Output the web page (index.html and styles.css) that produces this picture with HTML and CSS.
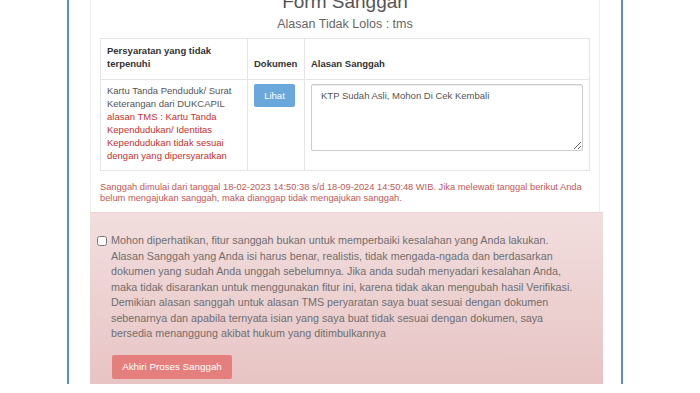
FILE: index.html
```html
<!DOCTYPE html>
<html lang="id">
<head>
  <meta charset="UTF-8">
  <meta name="viewport" content="width=device-width, initial-scale=1">
  <title>Form Sanggah</title>
  <link rel="stylesheet" href="styles.css">
</head>
<body>

<div class="frame">
  <div class="panel">
    <h2 class="title">Form Sanggah</h2>
    <p class="subtitle">Alasan Tidak Lolos : tms</p>

    <table class="req-table">
      <thead>
        <tr>
          <th class="col-req">Persyaratan yang tidak terpenuhi</th>
          <th class="col-doc">Dokumen</th>
          <th>Alasan Sanggah</th>
        </tr>
      </thead>
      <tbody>
        <tr>
          <td>
            Kartu Tanda Penduduk/ Surat Keterangan dari DUKCAPIL
            <span class="tms">alasan TMS : Kartu Tanda Kependudukan/ Identitas Kependudukan tidak sesuai dengan yang dipersyaratkan</span>
          </td>
          <td><button class="btn-info">Lihat</button></td>
          <td><textarea class="reason">KTP Sudah Asli, Mohon Di Cek Kembali</textarea></td>
        </tr>
      </tbody>
    </table>

    <p class="deadline">Sanggah dimulai dari tanggal 18-02-2023 14:50:38 s/d 18-09-2024 14:50:48 WIB. Jika melewati tanggal berikut Anda belum mengajukan sanggah, maka dianggap tidak mengajukan sanggah.</p>
  </div>

  <div class="alert">
    <label class="agree">
      <input type="checkbox">
      <span>Mohon diperhatikan, fitur sanggah bukan untuk memperbaiki kesalahan yang Anda lakukan. Alasan Sanggah yang Anda isi harus benar, realistis, tidak mengada-ngada dan berdasarkan dokumen yang sudah Anda unggah sebelumnya. Jika anda sudah menyadari kesalahan Anda, maka tidak disarankan untuk menggunakan fitur ini, karena tidak akan mengubah hasil Verifikasi. Demikian alasan sanggah untuk alasan TMS peryaratan saya buat sesuai dengan dokumen sebenarnya dan apabila ternyata isian yang saya buat tidak sesuai dengan dokumen, saya bersedia menanggung akibat hukum yang ditimbulkannya</span>
    </label>
    <button class="btn-danger" disabled>Akhiri Proses Sanggah</button>
  </div>
</div>

</body>
</html>
```

FILE: styles.css
```css
body {
  margin: 0;
  font-family: 'Liberation Sans', Arial, sans-serif;
  background: #fff;
  color: #333;
  overflow: hidden;
}

.frame {
  margin-left: 67px;
  width: 556px;
  height: 393px;
  border-left: 2px solid #5b8bd6;
  border-right: 2px solid #5b8bd6;
  padding: 0 21px 0 21px;
  box-sizing: border-box;
}

.panel {
  border: 1px solid #eef0f0;
  border-top: none;
  border-bottom: none;
  padding: 0 9px;
}

.title {
  margin: -9px 0 0;
  font-size: 19px;
  font-weight: normal;
  line-height: 22px;
  text-align: center;
  color: #555;
}
.subtitle {
  margin: 4px 0 6px;
  font-size: 12.5px;
  line-height: 15px;
  text-align: center;
  color: #666;
}

/* Table */
.req-table {
  width: 100%;
  border-collapse: collapse;
  font-size: 9.5px;
  line-height: 13px;
}
.req-table th,
.req-table td {
  border: 1px solid #e4e6e6;
  padding: 4px 6px 8px;
  text-align: left;
  vertical-align: top;
}
.req-table th {
  vertical-align: bottom;
  font-weight: bold;
  color: #333;
  padding-top: 5px;
  padding-bottom: 9px;
}
.req-table td { color: #555; }
.col-req { width: 134px; }
.col-doc { width: 44px; }
.tms { color: #c9302c; display: block; }

.btn-info {
  background: #6aa8db;
  color: #fff;
  border: none;
  border-radius: 2px;
  width: 41px;
  height: 23px;
  font-family: inherit;
  font-size: 9.5px;
  cursor: pointer;
}
.reason {
  display: block;
  width: 100%;
  height: 67px;
  box-sizing: border-box;
  border: 1px solid #ccc;
  border-radius: 2px;
  padding: 5px 9px;
  font-family: inherit;
  font-size: 9.5px;
  color: #555;
  resize: vertical;
  box-shadow: inset 0 1px 1px rgba(0,0,0,0.08);
}

.deadline {
  margin: 11px 0 0;
  padding-bottom: 8px;
  font-size: 9.3px;
  line-height: 11px;
  color: #c45753;
}

/* Alert */
.alert {
  margin-right: -3px;
  padding: 20px 20px 12px 7px;
  background: linear-gradient(to bottom, #f2dede 0, #e7c3c3 100%);
  border-top: 1px solid #e8d2d2;
  height: 179px;
  box-sizing: border-box;
}
.agree {
  display: flex;
  gap: 4px;
  font-size: 10.75px;
  line-height: 15.5px;
  color: #6f6f6f;
}
.agree span { max-width: 466px; }
.agree input {
  margin: 3px 0 0;
  width: 10px;
  height: 10px;
  flex: none;
}
.btn-danger {
  margin: 13px 0 0 15px;
  background: #e57f7d;
  color: #fff;
  border: none;
  border-radius: 2px;
  width: 120px;
  height: 24px;
  font-family: inherit;
  font-size: 9.8px;
}
```
